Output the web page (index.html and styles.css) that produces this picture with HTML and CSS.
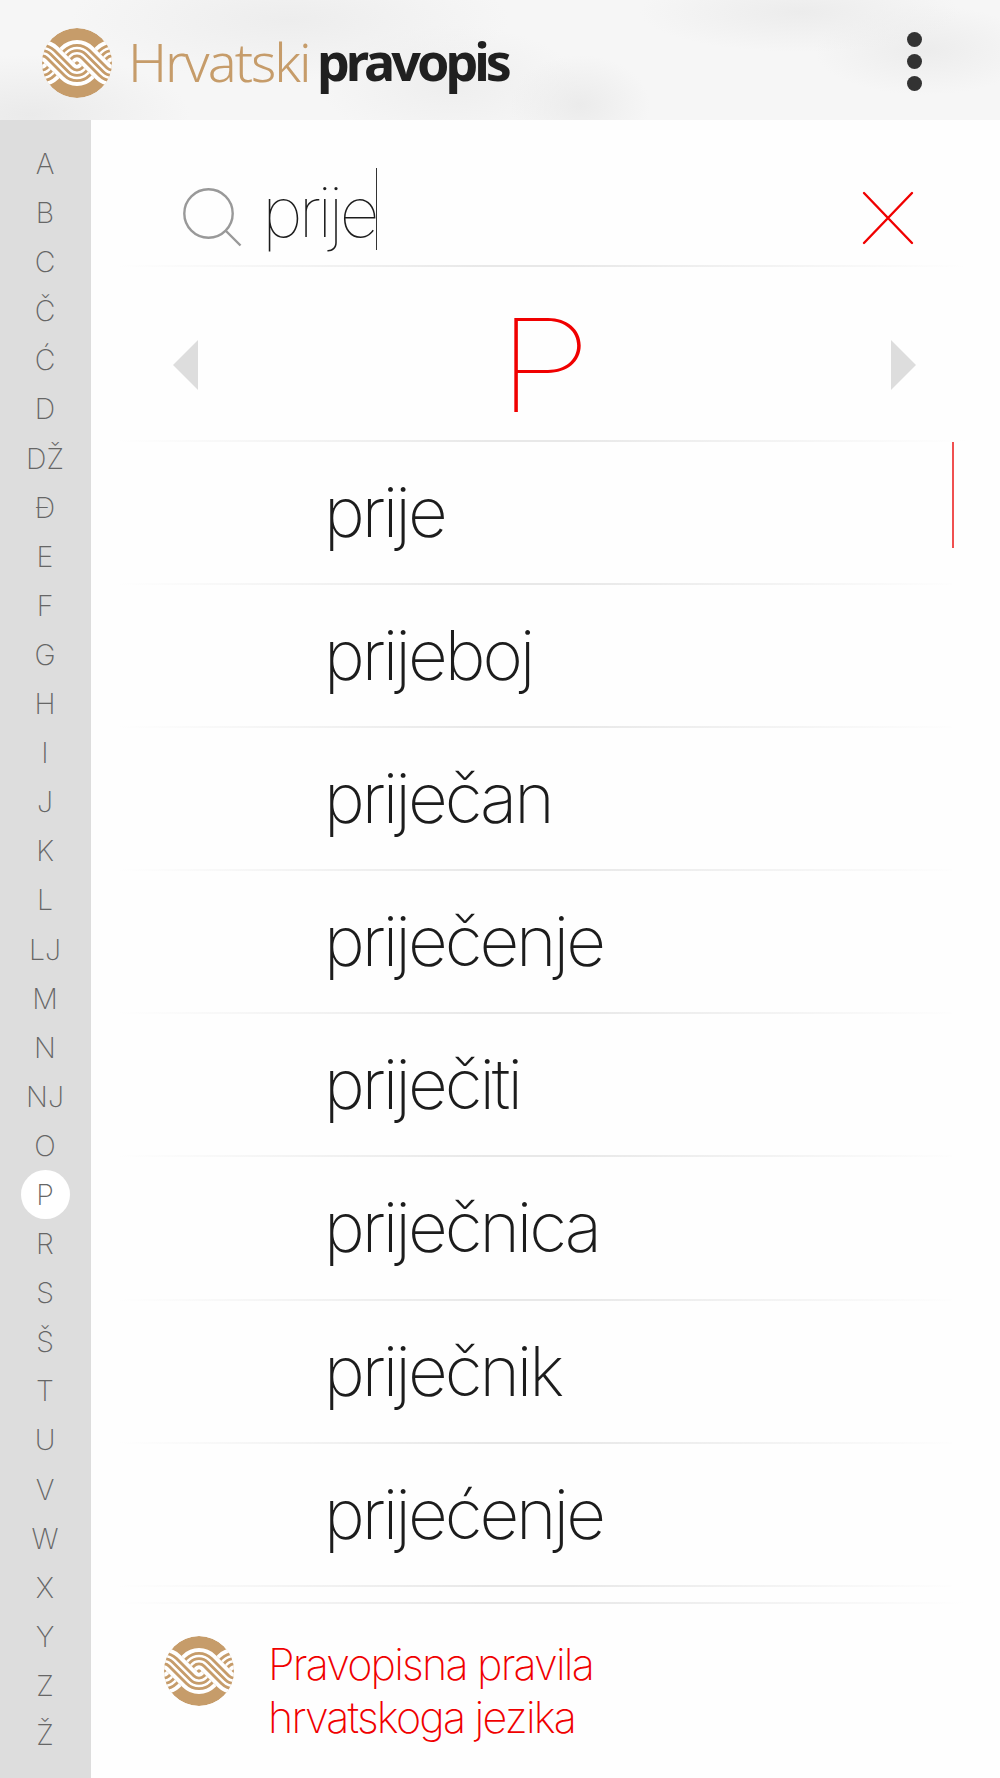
FILE: index.html
```html
<!DOCTYPE html>
<html lang="hr">
<head>
<meta charset="utf-8">
<meta name="viewport" content="width=device-width, initial-scale=1">
<title>Hrvatski pravopis</title>
<link rel="stylesheet" href="styles.css">
</head>
<body>

<!-- woven logo, used in the header and in the footer -->
<svg class="defs" width="0" height="0">
    <defs>
        <clipPath id="logoClip"><circle cx="105" cy="105" r="105"/></clipPath>
        <g id="strand">
            <path class="strand-bg" d="M-29.7,-22.7 L-26.2,-26.2 A37,37 0 0 1 26.2,-26.2 L78.8,26.2 A37,37 0 0 0 131.2,26.2 L134.7,22.7"/>
            <path class="weave" d="M-41,-34 L-37.5,-37.5 A53,53 0 0 1 37.5,-37.5 L90,15 A21.2,21.2 0 0 0 120,15 L123.5,11.5"/>
            <path class="weave" d="M-29.7,-22.7 L-26.2,-26.2 A37,37 0 0 1 26.2,-26.2 L78.8,26.2 A37,37 0 0 0 131.2,26.2 L134.7,22.7"/>
            <path class="weave" d="M-18.5,-11.5 L-15,-15 A21.2,21.2 0 0 1 15,-15 L67.5,37.5 A53,53 0 0 0 142.5,37.5 L146,34"/>
        </g>
        <symbol id="logo" viewBox="0 0 210 210">
            <g clip-path="url(#logoClip)">
                <circle class="logo-disc" cx="105" cy="105" r="105"/>
                <use href="#strand" x="-105" y="105"/>
                <use href="#strand" x="0" y="105"/>
                <use href="#strand" x="105" y="105"/>
                <use href="#strand" x="210" y="105"/>
            </g>
        </symbol>
    </defs>
</svg>

<div class="app">
    <header class="header">
        <svg class="logo"><use href="#logo"/></svg>
        <h1 class="title"><span class="title-light">Hrvatski</span><span class="title-bold">pravopis</span></h1>
        <button class="menu" aria-label="Izbornik"><i></i><i></i><i></i></button>
    </header>

    <div class="main">
        <nav class="letters">
            <a>A</a><a>B</a><a>C</a><a>Č</a><a>Ć</a><a>D</a><a>DŽ</a><a>Đ</a><a>E</a><a>F</a><a>G</a>
            <a>H</a><a>I</a><a>J</a><a>K</a><a>L</a><a>LJ</a><a>M</a><a>N</a><a>NJ</a><a>O</a><a class="active">P</a>
            <a>R</a><a>S</a><a>Š</a><a>T</a><a>U</a><a>V</a><a>W</a><a>X</a><a>Y</a><a>Z</a><a>Ž</a>
        </nav>

        <div class="content">
            <div class="search line">
                <svg class="search-icon" viewBox="0 0 60 60"><circle cx="26.5" cy="26.5" r="24.2"/><path d="M44,44 L58.5,58.5"/></svg>
                <span class="search-text">prije</span><span class="caret"></span>
                <svg class="clear" viewBox="0 0 52 54"><path d="M2,2 L50,52 M50,2 L2,52"/></svg>
            </div>

            <div class="current line">
                <svg class="arrow" viewBox="0 0 25 50"><path d="M25,0 V50 L0,25 Z"/></svg>
                <span class="current-letter">P</span>
                <svg class="arrow" viewBox="0 0 25 50"><path d="M0,0 V50 L25,25 Z"/></svg>
            </div>

            <div class="results">
                <ul class="words">
                    <li class="line">prije</li>
                    <li class="line">prijeboj</li>
                    <li class="line">priječan</li>
                    <li class="line">priječenje</li>
                    <li class="line">priječiti</li>
                    <li class="line">priječnica</li>
                    <li class="line">priječnik</li>
                    <li class="line">prijećenje</li>
                </ul>
                <div class="scrollbar"></div>
            </div>

            <div class="gap line"></div>

            <footer class="footer">
                <svg class="logo"><use href="#logo"/></svg>
                <p>Pravopisna pravila<br>hrvatskoga jezika</p>
            </footer>
        </div>
    </div>
</div>

</body>
</html>
```
FILE: styles.css
```css
* {
    box-sizing: border-box;
}

body {
    margin: 0;
    background: #fefefe;
    font-family: Inter, "Liberation Sans", sans-serif;
    color: #1c1c1c;
}

.defs {
    display: block;
}

.app {
    width: 1000px;
    height: 1778px;
    overflow: hidden;
}

/* header */
.header {
    display: flex;
    align-items: center;
    height: 120px;
    padding: 6px 78px 0 42px;
    background:
        radial-gradient(ellipse 160px 40px at 800px 12px, #ececec, transparent),
        radial-gradient(ellipse 110px 45px at 925px 50px, #ececec, transparent),
        radial-gradient(ellipse 70px 50px at 580px 105px, #ebebeb, transparent),
        radial-gradient(ellipse 220px 60px at 290px 20px, #ededed, transparent),
        radial-gradient(ellipse 130px 60px at 450px 85px, #eeeeee, transparent),
        radial-gradient(ellipse 160px 60px at 30px 115px, #eaeaea, transparent),
        #f6f6f6;
}

.logo {
    width: 70px;
    height: 70px;
    flex: none;
}

.logo-disc {
    fill: #c69c6a;
}

.strand-bg {
    fill: none;
    stroke: #fff;
    stroke-width: 64;
}

.weave {
    fill: none;
    stroke: #c69c6a;
    stroke-width: 8.5;
}

.title {
    display: flex;
    margin: -4px auto 0 16px;
    font-family: "Noto Sans", sans-serif;
    font-size: 54px;
    line-height: 70px;
}

.title-light {
    width: 189px;
    font-weight: 300;
    color: #c69c6a;
    letter-spacing: -2px;
}

.title-bold {
    font-size: 52px;
    font-weight: 700;
    color: #202020;
    letter-spacing: -4px;
}

.menu {
    display: flex;
    flex-direction: column;
    gap: 7px;
    margin-top: -3px;
    padding: 0;
    border: none;
    background: none;
}

.menu i {
    width: 15px;
    height: 15px;
    border-radius: 50%;
    background: #333;
}

.main {
    display: flex;
    height: 1658px;
}

/* alphabet */
.letters {
    display: flex;
    flex-direction: column;
    align-items: center;
    width: 91px;
    padding-top: 19px;
    background: #ddd;
}

.letters a {
    width: 49px;
    height: 49.1px;
    flex: none;
    border-radius: 50%;
    font-size: 28.5px;
    font-weight: 250;
    line-height: 50px;
    text-align: center;
    text-indent: -1px;
    color: #666;
    white-space: nowrap;
}

.letters .active {
    background: #fff;
}

.content {
    flex: 1;
}

.line {
    background: linear-gradient(to right, transparent 3%, #e8e8e8 45%, #e8e8e8 55%, transparent) 0 100% / 875px 2px no-repeat;
}

/* search */
.search {
    display: flex;
    align-items: flex-start;
    height: 147px;
    padding: 48px 0 0 91px;
}

.search-icon {
    width: 60px;
    height: 60px;
    margin: 19px 0 0 0;
    fill: none;
    stroke: #999;
    stroke-width: 2.4;
}

.search-text {
    padding-left: 20px;
    font-size: 70px;
    font-weight: 100;
    line-height: 87px;
    letter-spacing: -4.1px;
}

.caret {
    width: 1px;
    height: 82px;
    margin-left: 1px;
    background: #333;
}

.clear {
    width: 52px;
    height: 54px;
    margin: 23px 86px 0 auto;
    fill: none;
    stroke: #f00000;
    stroke-width: 2.4;
    stroke-linecap: round;
}

/* current letter */
.current {
    display: flex;
    align-items: center;
    justify-content: space-between;
    height: 175px;
    padding: 20px 84px 0 82px;
}

.arrow {
    width: 25px;
    height: 50px;
    fill: #ddd;
}

.current-letter {
    font-size: 129px;
    font-weight: 100;
    line-height: 150px;
    color: #f00000;
    transform: scaleX(1.22);
}

/* word list */
.results {
    display: flex;
    height: 1144px;
}

.words {
    width: 861px;
    margin: 0;
    padding: 0;
    list-style: none;
}

.words li {
    height: 143.1px;
    padding-left: 233px;
    font-size: 69px;
    font-weight: 200;
    line-height: 140px;
    letter-spacing: -3px;
}

.scrollbar {
    width: 2px;
    height: 106px;
    background: #f05050;
}

.gap {
    height: 18px;
}

.footer {
    display: flex;
    padding: 32px 0 0 73px;
}

.footer p {
    margin: 2px 0 0 34px;
    font-size: 43px;
    font-weight: 200;
    line-height: 53px;
    letter-spacing: -1.8px;
    color: #f00000;
}
```
